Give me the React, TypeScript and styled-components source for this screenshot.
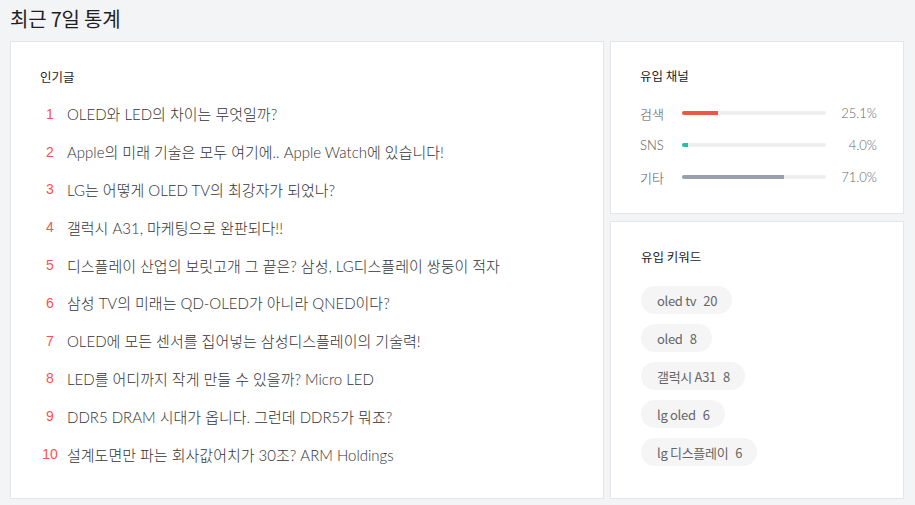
import React from "react";
import styled, { createGlobalStyle } from "styled-components";

const Global = createGlobalStyle`
  html, body { margin: 0; padding: 0; background: #f3f4f6; }
  body { font-family: Lato, "Noto Sans CJK KR", sans-serif; }
  * { box-sizing: border-box; }
`;

const Page = styled.div`
  width: 915px;
  height: 505px;
  padding: 0 11px 6px 10px;
  display: flex;
  flex-direction: column;
`;

const Title = styled.h1`
  margin: 0;
  height: 41px;
  display: flex;
  align-items: center;
  padding-bottom: 4px;
  font-family: "Noto Sans CJK KR", sans-serif;
  font-size: 20px;
  font-weight: 400;
  color: #1f1f1f;
  letter-spacing: -0.2px;
`;

const Grid = styled.div`
  flex: 1;
  display: grid;
  grid-template-columns: 594px 294px;
  column-gap: 6px;
`;

const Card = styled.section<{ $pad: string }>`
  background: #fff;
  border: 1px solid #e3e5e9;
  padding: ${(p) => p.$pad};
`;

const Side = styled.div`
  display: grid;
  grid-template-rows: 173px 1fr;
  row-gap: 7px;
`;

const Heading = styled.h2<{ $mb: number }>`
  margin: 0 0 ${(p) => p.$mb}px;
  height: 18px;
  line-height: 18px;
  font-family: "Noto Sans CJK KR", sans-serif;
  font-size: 12.5px;
  font-weight: 400;
  color: #222;
`;

const List = styled.ol`
  list-style: none;
  margin: 0;
  padding: 0;
`;

const Item = styled.li`
  display: flex;
  align-items: center;
  height: 37.8px;
`;

const Rank = styled.span`
  width: 20px;
  margin-right: 7px;
  text-align: center;
  font-family: "Liberation Sans", Arial, sans-serif;
  font-size: 14px;
  color: #f5544d;
`;

const ItemText = styled.span`
  font-family: Lato, "Noto Sans CJK KR", sans-serif;
  font-size: 15px;
  font-weight: 300;
  color: #333;
`;

const ChannelRow = styled.div`
  display: flex;
  align-items: center;
  height: 32px;
`;

const ChannelLabel = styled.span`
  width: 42px;
  font-family: Lato, "Noto Sans CJK KR", sans-serif;
  font-size: 13px;
  font-weight: 300;
  color: #555;
`;

const Track = styled.div`
  width: 144px;
  height: 4px;
  background: #eeeeee;
  border-radius: 2px;
  overflow: hidden;
`;

const Fill = styled.div<{ $color: string }>`
  height: 100%;
  background: ${(p) => p.$color};
`;

const Percent = styled.span`
  flex: 1;
  text-align: right;
  font-family: Lato, sans-serif;
  font-size: 13px;
  font-weight: 300;
  color: #666;
`;

const Chips = styled.div`
  display: flex;
  flex-direction: column;
  align-items: flex-start;
  gap: 10px;
`;

const Chip = styled.span`
  display: inline-flex;
  align-items: center;
  gap: 7px;
  height: 28px;
  padding: 0 15px 0 16px;
  border-radius: 14px;
  background: #f5f5f6;
  font-family: "Noto Sans CJK KR", sans-serif;
  font-size: 13px;
  color: #666;
  letter-spacing: -0.3px;
`;

const posts = [
  "OLED와 LED의 차이는 무엇일까?",
  "Apple의 미래 기술은 모두 여기에.. Apple Watch에 있습니다!",
  "LG는 어떻게 OLED TV의 최강자가 되었나?",
  "갤럭시 A31, 마케팅으로 완판되다!!",
  "디스플레이 산업의 보릿고개 그 끝은? 삼성, LG디스플레이 쌍둥이 적자",
  "삼성 TV의 미래는 QD-OLED가 아니라 QNED이다?",
  "OLED에 모든 센서를 집어넣는 삼성디스플레이의 기술력!",
  "LED를 어디까지 작게 만들 수 있을까? Micro LED",
  "DDR5 DRAM 시대가 옵니다. 그런데 DDR5가 뭐죠?",
  "설계도면만 파는 회사값어치가 30조? ARM Holdings",
];

const channels = [
  { label: "검색", value: 25.1, color: "#f25446" },
  { label: "SNS", value: 4.0, color: "#1ec3a4" },
  { label: "기타", value: 71.0, color: "#9aa0a9" },
];

const keywords = [
  { k: "oled tv", n: 20 },
  { k: "oled", n: 8 },
  { k: "갤럭시 A31", n: 8 },
  { k: "lg oled", n: 6 },
  { k: "lg 디스플레이", n: 6 },
];

export default function App() {
  return (
    <>
      <Global />
      <Page>
        <Title>최근 7일 통계</Title>
        <Grid>
          <Card $pad="26px 30px 0 29px">
            <Heading $mb={9}>인기글</Heading>
            <List>
              {posts.map((p, i) => (
                <Item key={i}>
                  <Rank>{i + 1}</Rank>
                  <ItemText>{p}</ItemText>
                </Item>
              ))}
            </List>
          </Card>
          <Side>
            <Card $pad="25px 26px 0 29px">
              <Heading $mb={12}>유입 채널</Heading>
              {channels.map((c) => (
                <ChannelRow key={c.label}>
                  <ChannelLabel>{c.label}</ChannelLabel>
                  <Track>
                    <Fill $color={c.color} style={{ width: `${c.value}%` }} />
                  </Track>
                  <Percent>{c.value.toFixed(1)}%</Percent>
                </ChannelRow>
              ))}
            </Card>
            <Card $pad="26px 26px 0 30px">
              <Heading $mb={20}>유입 키워드</Heading>
              <Chips>
                {keywords.map((k) => (
                  <Chip key={k.k}>
                    <span>{k.k}</span>
                    <span>{k.n}</span>
                  </Chip>
                ))}
              </Chips>
            </Card>
          </Side>
        </Grid>
      </Page>
    </>
  );
}
